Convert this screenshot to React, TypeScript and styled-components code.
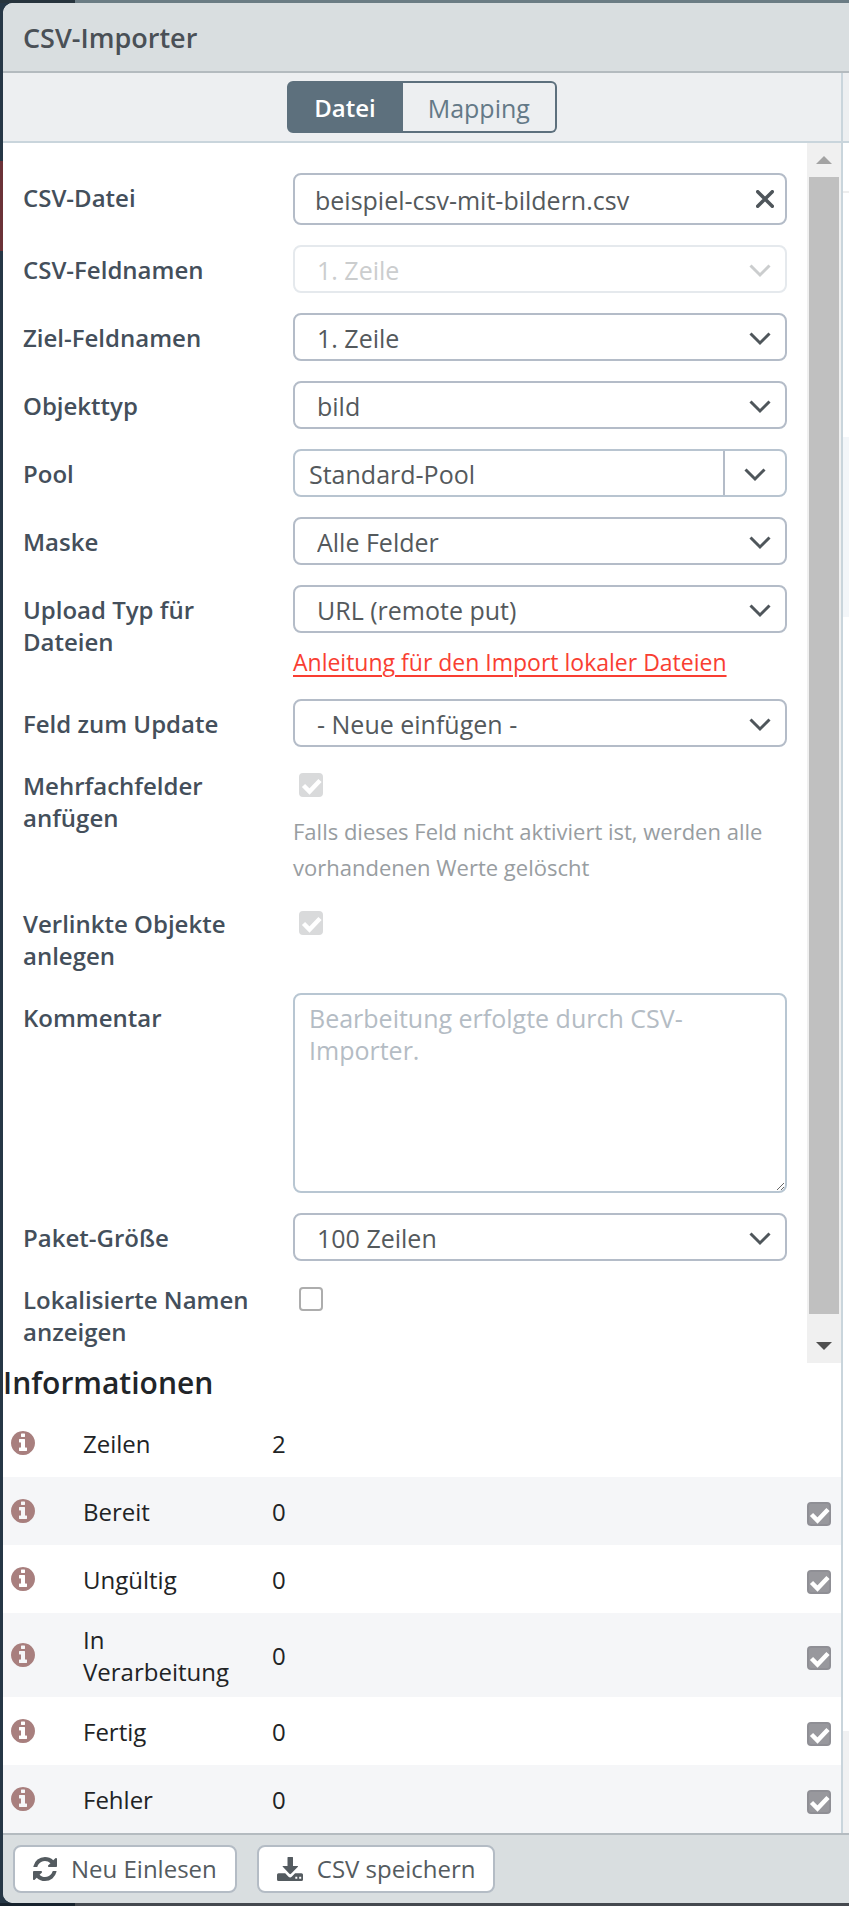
import React, { useId } from "react";
import styled, { createGlobalStyle, css } from "styled-components";

const Global = createGlobalStyle`
  *, *::before, *::after { box-sizing: border-box; }
  html, body { margin: 0; }
  body, button, input, select, textarea {
    font-family: "Open Sans", "Noto Sans", sans-serif;
    font-size: 24px;
    line-height: 32px;
  }
`;

const Backdrop = styled.div`
  display: flex;
  padding: 3px 0 3px 3px;
  background:
    linear-gradient(#6b3238, #6b3238) 0 161px / 3px 90px no-repeat,
    linear-gradient(#27343d, #27343d) 0 0 / 75px 3px no-repeat,
    linear-gradient(#17222d, #17222d) 0 100% / 75px 3px no-repeat,
    linear-gradient(#6b7c84, #6b7c84) 0 0 / 100% 3px no-repeat,
    linear-gradient(#45494f, #45494f) 0 100% / 100% 3px no-repeat,
    #263746;
`;

const Dialog = styled.section`
  flex: 1;
  min-width: 0;
  display: flex;
  flex-direction: column;
  background: #fff;
  border-radius: 10px 0 0 10px;
  overflow: hidden;
`;

const Header = styled.header`
  padding: 19px 20px 17px;
  background: #d9dee0;
  border-bottom: 2px solid #b4bbbf;
`;

const Title = styled.h1`
  margin: 0;
  font-size: 27px;
  line-height: 32px;
  font-weight: 600;
  color: #4a5056;
`;

const Body = styled.div`
  display: flex;
`;

const Pane = styled.div`
  flex: 1;
  min-width: 0;
`;

const SidePane = styled.div`
  flex: 0 0 8px;
  border-left: 2px solid #c9d5dc;
  background:
    linear-gradient(#edeff1, #edeff1) 0 0 / 100% 68px no-repeat,
    linear-gradient(#c9d5dc, #c9d5dc) 0 68px / 100% 2px no-repeat,
    linear-gradient(#eeeeee, #eeeeee) 0 118px / 100% 2px no-repeat,
    linear-gradient(#f3f6f9, #f3f6f9) 0 364px / 100% 180px no-repeat,
    linear-gradient(#f0f1f2, #f0f1f2) 0 100% / 100% 102px no-repeat;
`;

const TabBar = styled.nav`
  display: flex;
  justify-content: center;
  padding: 8px;
  background: #edeff1;
  border-bottom: 2px solid #c9d5dc;
`;

const Tab = styled.button<{ $active?: boolean }>`
  height: 52px;
  padding: 1px 25px 0;
  font-size: ${(p) => (p.$active ? 24 : 25)}px;
  border: 2px solid #5d707d;
  background: ${(p) => (p.$active ? "#5d707d" : "transparent")};
  color: ${(p) => (p.$active ? "#fff" : "#647987")};
  font-weight: ${(p) => (p.$active ? 600 : 400)};
  &:first-child { border-radius: 6px 0 0 6px; }
  &:last-child { border-radius: 0 6px 6px 0; border-left: 0; }
`;

const ScrollArea = styled.div`
  display: flex;
`;

const Form = styled.form`
  flex: 1;
  min-width: 0;
  padding: 30px 20px 14px;
  display: grid;
  gap: 20px;
`;

const FormRow = styled.div`
  display: grid;
  grid-template-columns: 270px minmax(0, 1fr);
  align-items: start;
`;

const Label = styled.label<{ $top?: number }>`
  padding: ${(p) => p.$top ?? 9}px 24px 1px 0;
  font-weight: 600;
  color: #444f5b;
`;

const boxed = css`
  width: 100%;
  border: 2px solid #b4bcc8;
  border-radius: 8px;
  background: #fff;
  color: #54595c;
  font-size: 25px;
`;

const SelectWrap = styled.div`
  position: relative;
  height: 48px;
`;

const Select = styled.select`
  ${boxed}
  appearance: none;
  height: 48px;
  padding: 1px 56px 0 22px;
  &:disabled { border-color: #e5e9ed; color: #cbcdce; opacity: 1; }
`;

const SelectArrow = styled.span<{ $muted?: boolean }>`
  position: absolute;
  right: 16px;
  top: 19px;
  display: flex;
  pointer-events: none;
  color: ${(p) => (p.$muted ? "#cbcdce" : "#4f565b")};
`;

const FileBox = styled.div`
  ${boxed}
  display: flex;
  height: 52px;
`;

const FileName = styled.input`
  flex: 1;
  min-width: 0;
  padding: 1px 0 0 20px;
  border: 0;
  background: none;
  color: inherit;
  font-size: 25px;
`;

const IconButton = styled.button`
  display: flex;
  align-items: center;
  justify-content: center;
  width: 40px;
  padding: 0;
  border: 0;
  background: none;
  color: #4f565b;
`;

const Combo = styled.div`
  ${boxed}
  display: flex;
  height: 48px;
  border-color: #b8c4d0;
`;

const ComboInput = styled.input`
  flex: 1;
  min-width: 0;
  padding: 1px 14px 0;
  border: 0;
  background: none;
  color: inherit;
  font-size: 25px;
`;

const ComboButton = styled(IconButton)`
  width: 62px;
  padding-top: 4px;
  border-left: 2px solid #b4bcc8;
`;

const HelpLink = styled.a`
  display: block;
  margin-top: 12px;
  line-height: 34px;
  font-size: 23px;
  color: #f93e32;
  text-underline-offset: 4px;
  text-decoration-thickness: 2px;
`;

const Hint = styled.p`
  margin: 16px 0 0;
  font-size: 22px;
  line-height: 36px;
  color: #989da1;
`;

const CheckCell = styled.div`
  padding: 6px 0 0 6px;
  display: flex;
`;

const CheckBox = styled.span`
  position: relative;
  display: flex;
  width: 24px;
  height: 24px;
  svg { position: absolute; inset: 0; pointer-events: none; }
`;

const CheckInput = styled.input`
  appearance: none;
  width: 24px;
  height: 24px;
  margin: 0;
  border: 2px solid #adadad;
  border-radius: 4px;
  background: #fff;
  &:checked { background: #98989d; border-color: #8f8f95; }
  &:checked:disabled { background: #d9dadb; border-color: #d9dadb; }
`;

const TextArea = styled.textarea`
  ${boxed}
  display: block;
  height: 200px;
  padding: 7px 14px;
  border-color: #b8c6d2;
  resize: vertical;
  &::placeholder { color: #b4bcc4; opacity: 1; }
`;

const ScrollBar = styled.div`
  flex: 0 0 34px;
  display: flex;
  flex-direction: column;
  align-items: center;
  background: #f0f0f0;
`;

const ScrollEnd = styled.span`
  display: flex;
  align-items: center;
  height: 34px;
`;

const ScrollThumb = styled.div`
  flex: 1;
  width: 30px;
  margin-bottom: 15px;
  background: #c0c0c0;
`;

const SectionTitle = styled.h2`
  margin: 0;
  padding-bottom: 6px;
  font-size: 30px;
  line-height: 40px;
  font-weight: 600;
  color: #212529;
`;

const InfoTable = styled.table`
  width: 100%;
  border-collapse: collapse;
  table-layout: fixed;
  color: #212325;
`;

const InfoRow = styled.tr`
  height: 68px;
  &:nth-child(even) { background: #f5f6f8; }
`;

const IconCell = styled.td`
  width: 80px;
  padding: 0 0 0 8px;
  color: #a87f7e;
  svg { display: block; }
`;

const NameCell = styled.th`
  width: 189px;
  padding: 11px 24px 9px 0;
  text-align: left;
  font-weight: 400;
`;

const ValueCell = styled.td`
  padding: 2px 0 0;
`;

const ToggleCell = styled.td`
  width: 34px;
  padding: 6px 0 0;
`;

const Footer = styled.footer`
  display: flex;
  gap: 20px;
  padding: 10px;
  background: #d9dee0;
  border-top: 2px solid #b4bbc0;
`;

const ActionButton = styled.button`
  display: flex;
  align-items: center;
  gap: 14px;
  height: 48px;
  padding: 0 18px;
  border: 2px solid #b4bcc5;
  border-radius: 8px;
  background: #fff;
  color: #545b60;
`;

const Chevron = () => (
  <svg width="22" height="14" viewBox="0 0 22 14" fill="none" stroke="currentColor" strokeWidth="3" aria-hidden="true">
    <path d="M1.5 1.5 11 11l9.5-9.5" />
  </svg>
);

const Cross = () => (
  <svg width="18" height="18" viewBox="0 0 18 18" fill="none" stroke="currentColor" strokeWidth="3.500" strokeLinecap="round" aria-hidden="true">
    <path d="M1.700 1.700l14.600 14.600M16.300 1.700l-14.600 14.600" />
  </svg>
);

const Tick = () => (
  <svg width="24" height="24" viewBox="0 0 24 24" fill="none" stroke="#fff" strokeWidth="4.500" aria-hidden="true">
    <path d="M4.500 12.500l6 6L21 7.500" />
  </svg>
);

const InfoIcon = () => (
  <svg width="24" height="24" viewBox="0 0 1536 1536" fill="currentColor" aria-hidden="true">
    <path d="M1024 1248v-160q0-14-9-23t-23-9h-96v-512q0-14-9-23t-23-9h-320q-14 0-23 9t-9 23v160q0 14 9 23t23 9h96v320h-96q-14 0-23 9t-9 23v160q0 14 9 23t23 9h448q14 0 23-9t9-23zM896 352v-160q0-14-9-23t-23-9h-192q-14 0-23 9t-9 23v160q0 14 9 23t23 9h192q14 0 23-9t9-23zM1536 768q0 209-103 385.500t-279.500 279.500-385.500 103-385.500-103-279.500-279.500-103-385.500 103-385.500 279.500-279.500 385.500-103 385.500 103 279.500 279.500 103 385.500z" />
  </svg>
);

const RefreshIcon = () => (
  <svg width="24" height="24" viewBox="0 128 1536 1536" fill="currentColor" aria-hidden="true">
    <path d="M1511 1056q0 5-1 7-64 268-268 434.500t-478 166.500q-146 0-282.500-55t-243.500-157l-129 129q-19 19-45 19t-45-19-19-45v-448q0-26 19-45t45-19h448q26 0 45 19t19 45-19 45l-137 137q71 66 161 102t187 36q134 0 250-65t186-179q11-17 53-117 8-23 30-23h192q13 0 22.500 9.500t9.500 22.500zm25-800v448q0 26-19 45t-45 19h-448q-26 0-45-19t-19-45 19-45l138-138q-148-137-349-137-134 0-250 65t-186 179q-11 17-53 117-8 23-30 23h-199q-13 0-22.500-9.500t-9.500-22.500v-7q65-268 270-434.500t480-166.500q146 0 284 55.500t245 156.500l130-129q19-19 45-19t45 19 19 45z" />
  </svg>
);

const DownloadIcon = () => (
  <svg width="26" height="24" viewBox="0 0 26 24" fill="currentColor" aria-hidden="true">
    <path d="M11 0h4.500q.5 0 .5.500V9h4.500q1 0 .4.800l-6.900 7q-.8.700-1.600 0l-6.600-7Q5 9 6 9h4.500V.500Q10.500 0 11 0z" />
    <path fillRule="evenodd" d="M1.500 16.300h6.700l3.300 3.400q1.600 1.500 3.200 0l3.400-3.400h6.400q1.500 0 1.500 1.500v4.700q0 1.500-1.500 1.500h-23Q0 24 0 22.500v-4.700q0-1.500 1.500-1.500zM18.300 19.800v2h2v-2zM22.200 19.800v2h2v-2z" />
  </svg>
);

function SelectRow({ label, value, disabled, children }: {
  label: string; value: string; disabled?: boolean; children?: React.ReactNode;
}) {
  const id = useId();
  return (
    <FormRow>
      <Label htmlFor={id}>{label}</Label>
      <div>
        <SelectWrap>
          <Select id={id} disabled={disabled} defaultValue={value}>
            <option>{value}</option>
          </Select>
          <SelectArrow $muted={disabled}><Chevron /></SelectArrow>
        </SelectWrap>
        {children}
      </div>
    </FormRow>
  );
}

function Check({ id, label, checked, disabled }: {
  id?: string; label?: string; checked?: boolean; disabled?: boolean;
}) {
  return (
    <CheckBox>
      <CheckInput type="checkbox" id={id} aria-label={label} defaultChecked={checked} disabled={disabled} />
      {checked && <Tick />}
    </CheckBox>
  );
}

function CheckRow({ label, checked, disabled, children }: {
  label: string; checked?: boolean; disabled?: boolean; children?: React.ReactNode;
}) {
  const id = useId();
  return (
    <FormRow>
      <Label htmlFor={id} $top={3}>{label}</Label>
      <div>
        <CheckCell><Check id={id} checked={checked} disabled={disabled} /></CheckCell>
        {children}
      </div>
    </FormRow>
  );
}

const infoRows = [
  { name: "Zeilen", value: 2, toggle: false },
  { name: "Bereit", value: 0, toggle: true },
  { name: "Ungültig", value: 0, toggle: true },
  { name: "In Verarbeitung", value: 0, toggle: true },
  { name: "Fertig", value: 0, toggle: true },
  { name: "Fehler", value: 0, toggle: true },
];

export default function App() {
  return (
    <Backdrop>
      <Global />
      <Dialog aria-label="CSV-Importer">
        <Header><Title>CSV-Importer</Title></Header>
        <Body>
          <Pane>
            <TabBar>
              <Tab type="button" $active>Datei</Tab>
              <Tab type="button">Mapping</Tab>
            </TabBar>
            <ScrollArea>
              <Form>
                <FormRow>
                  <Label htmlFor="file">CSV-Datei</Label>
                  <FileBox>
                    <FileName id="file" readOnly value="beispiel-csv-mit-bildern.csv" />
                    <IconButton type="button" aria-label="Datei entfernen"><Cross /></IconButton>
                  </FileBox>
                </FormRow>
                <SelectRow label="CSV-Feldnamen" value="1. Zeile" disabled />
                <SelectRow label="Ziel-Feldnamen" value="1. Zeile" />
                <SelectRow label="Objekttyp" value="bild" />
                <FormRow>
                  <Label htmlFor="pool">Pool</Label>
                  <Combo>
                    <ComboInput id="pool" defaultValue="Standard-Pool" />
                    <ComboButton type="button" aria-label="Pool auswählen"><Chevron /></ComboButton>
                  </Combo>
                </FormRow>
                <SelectRow label="Maske" value="Alle Felder" />
                <SelectRow label="Upload Typ für Dateien" value="URL (remote put)">
                  <HelpLink href="#anleitung">Anleitung für den Import lokaler Dateien</HelpLink>
                </SelectRow>
                <SelectRow label="Feld zum Update" value="- Neue einfügen -" />
                <CheckRow label="Mehrfachfelder anfügen" checked disabled>
                  <Hint>Falls dieses Feld nicht aktiviert ist, werden alle vorhandenen Werte gelöscht</Hint>
                </CheckRow>
                <CheckRow label="Verlinkte Objekte anlegen" checked disabled />
                <FormRow>
                  <Label htmlFor="comment">Kommentar</Label>
                  <TextArea id="comment" placeholder="Bearbeitung erfolgte durch CSV-Importer." />
                </FormRow>
                <SelectRow label="Paket-Größe" value="100 Zeilen" />
                <CheckRow label="Lokalisierte Namen anzeigen" />
              </Form>
              <ScrollBar aria-hidden="true">
                <ScrollEnd>
                  <svg width="16" height="8" viewBox="0 0 16 8"><path d="M0 8 8 0l8 8z" fill="#a3a3a3" /></svg>
                </ScrollEnd>
                <ScrollThumb />
                <ScrollEnd>
                  <svg width="16" height="8" viewBox="0 0 16 8"><path d="M0 0h16L8 8z" fill="#505050" /></svg>
                </ScrollEnd>
              </ScrollBar>
            </ScrollArea>
            <SectionTitle>Informationen</SectionTitle>
            <InfoTable>
              <tbody>
                {infoRows.map((row) => (
                  <InfoRow key={row.name}>
                    <IconCell><InfoIcon /></IconCell>
                    <NameCell scope="row">{row.name}</NameCell>
                    <ValueCell>{row.value}</ValueCell>
                    <ToggleCell>{row.toggle && <Check label={row.name} checked />}</ToggleCell>
                  </InfoRow>
                ))}
              </tbody>
            </InfoTable>
          </Pane>
          <SidePane />
        </Body>
        <Footer>
          <ActionButton type="button"><RefreshIcon />Neu Einlesen</ActionButton>
          <ActionButton type="button"><DownloadIcon />CSV speichern</ActionButton>
        </Footer>
      </Dialog>
    </Backdrop>
  );
}
